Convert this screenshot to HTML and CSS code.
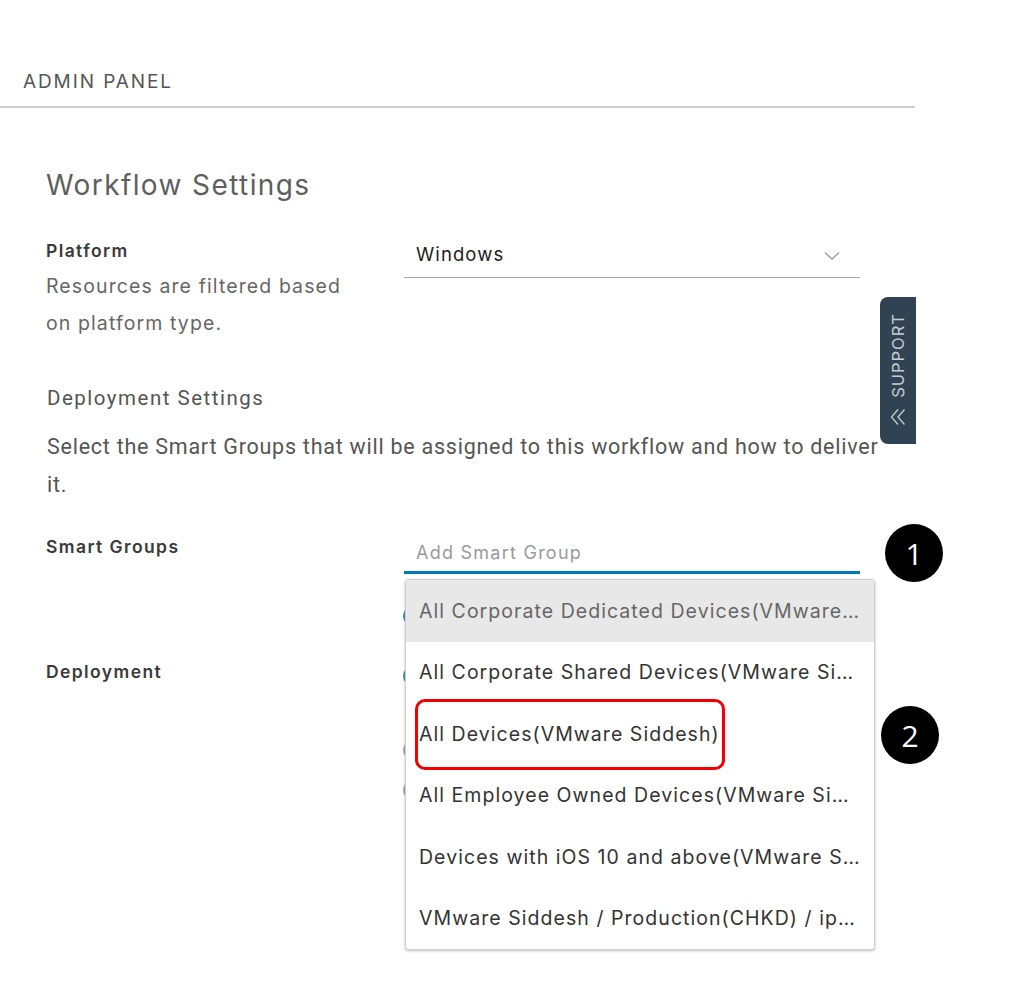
FILE: index.html
```html
<!DOCTYPE html>
<html>
<head>
<meta charset="utf-8">
<link rel="stylesheet" href="styles.css">
</head>
<body>
<div class="page">
  <div class="header">ADMIN PANEL</div>
  <div class="content">
    <h1 class="title">Workflow Settings</h1>
    <div class="row row-platform">
      <div class="label-col">
        <div class="label">Platform</div>
        <div class="help">Resources are filtered based on platform type.</div>
      </div>
      <div class="control-col">
        <div class="select">
          <span>Windows</span>
          <svg class="chev" width="16" height="10" viewBox="0 0 16 10"><path d="M1 1.5 L8 8 L15 1.5" fill="none" stroke="#9a9a9a" stroke-width="1.3"/></svg>
        </div>
      </div>
    </div>
    <div class="section">
      <div class="section-title">Deployment Settings</div>
      <div class="section-desc">Select the Smart Groups that will be assigned to this workflow and how to deliver it.</div>
    </div>
    <div class="row row-groups">
      <div class="label-col"><div class="label">Smart Groups</div></div>
      <div class="control-col">
        <div class="input">Add Smart Group</div>
        <div class="radios">
          <span class="radio blue r1"></span>
          <span class="radio blue r2"></span>
          <span class="radio grey r3"></span>
          <span class="radio grey r4"></span>
        </div>
        <div class="menu">
          <div class="item active">All Corporate Dedicated Devices(VMware…</div>
          <div class="item">All Corporate Shared Devices(VMware Si…</div>
          <div class="item">All Devices(VMware Siddesh)<span class="hl"></span></div>
          <div class="item">All Employee Owned Devices(VMware Si…</div>
          <div class="item">Devices with iOS 10 and above(VMware S…</div>
          <div class="item">VMware Siddesh / Production(CHKD) / ip…</div>
        </div>
      </div>
      <div class="badge b1">1</div>
      <div class="badge b2">2</div>
    </div>
    <div class="row row-deploy">
      <div class="label-col"><div class="label">Deployment</div></div>
    </div>
  </div>
  <div class="support">
    <span class="support-text">SUPPORT</span>
    <svg class="support-chev" width="16" height="18" viewBox="0 0 16 18"><path d="M8 1.5 L1.5 9 L8 16.5 M14.5 1.5 L8 9 L14.5 16.5" fill="none" stroke="#c5ccd3" stroke-width="1.3"/></svg>
  </div>
</div>
</body>
</html>
```
FILE: styles.css
```css
* { box-sizing: border-box; }
html, body { margin: 0; padding: 0; background: #fff; }
body { font-family: Inter, "Open Sans", sans-serif; color: #565656; }
.page { position: relative; width: 1024px; height: 993px; overflow: hidden; }

.header {
  width: 915px;
  height: 108px;
  padding: 70px 0 0 23px;
  font-size: 19px;
  color: #565656;
  border-bottom: 2px solid #d2d2d2;
  letter-spacing: 1.9px;
}

.content { padding-left: 46px; width: 915px; }

.title {
  margin: 60px 0 0 0;
  font-size: 28px;
  font-weight: 400;
  color: #5e5e5e;
  line-height: 34px;
  letter-spacing: 1.4px;
}

.row { display: flex; position: relative; }
.label-col { width: 358px; }
.control-col { width: 456px; position: relative; }

.label { font-size: 17.5px; font-weight: 600; color: #3a3a3a; line-height: 22px; letter-spacing: 1.4px; }
.help { font-size: 19.5px; color: #666; line-height: 37px; width: 310px; margin-top: 6px; letter-spacing: 1.1px; }

.row-platform { margin-top: 38px; }
.select {
  height: 44px;
  border-bottom: 1.5px solid #a8a8a8;
  display: flex;
  align-items: center;
  justify-content: space-between;
  padding: 0 20px 4px 12px;
  font-size: 18.5px;
  letter-spacing: 1.1px;
  color: #222;
  margin-top: -6px;
}
.chev { margin-top: 4px; }

.section { margin-top: 44px; padding-left: 1px; }
.section-title { font-family: Roboto, sans-serif; font-size: 20.5px; letter-spacing: 1.5px; color: #555; line-height: 24px; }
.section-desc { font-family: Roboto, sans-serif; font-size: 21.5px; letter-spacing: 0.75px; color: #555; line-height: 38px; margin-top: 18px; width: 852px; }

.row-groups { margin-top: 32px; height: 125px; }
.input {
  height: 39px;
  border-bottom: 3px solid #0079b8;
  padding: 0 12px 2px;
  font-size: 18px;
  letter-spacing: 1.25px;
  color: #9a9a9a;
  display: flex;
  align-items: center;
  margin-top: -1px;
}
.radio { position: absolute; left: -1px; width: 20px; height: 20px; border-radius: 50%; border: 3px solid #3a8fc0; display: block; }
.radio.grey { border-color: #a8a8a8; }
.r1 { top: 70px; }
.r2 { top: 130px; }
.r3 { top: 204px; }
.r4 { top: 244px; }

.menu {
  position: absolute;
  left: 1px;
  top: 43px;
  width: 470px;
  background: #fff;
  border: 1px solid #cfcfcf;
  border-radius: 3px;
  box-shadow: 0 1px 3px rgba(0,0,0,0.25);
  z-index: 2;
}
.item {
  position: relative;
  height: 61.5px;
  padding: 0 13px;
  display: flex;
  align-items: center;
  font-size: 19.5px;
  letter-spacing: 1.05px;
  color: #333;
  white-space: nowrap;
}
.item.active { background: #e8e8e8; color: #666; }
.hl {
  position: absolute;
  left: 9px;
  top: -4px;
  width: 310px;
  height: 71px;
  border: 3px solid #f40000;
  border-radius: 10px;
}

.badge {
  position: absolute;
  width: 58px;
  height: 58px;
  border-radius: 50%;
  background: #000;
  color: #fff;
  font-family: "Open Sans", sans-serif;
  font-size: 30px;
  display: flex;
  align-items: center;
  justify-content: center;
  z-index: 3;
}
.b1 { left: 839px; top: -12px; }
.b2 { left: 835px; top: 170px; }

.row-deploy { margin-top: 0; }

.support {
  position: absolute;
  left: 880px;
  top: 297px;
  width: 36px;
  height: 147px;
  background: #314352;
  border-radius: 8px 0 0 8px;
  display: flex;
  flex-direction: column;
  align-items: center;
  padding-top: 16px;
}
.support-text {
  writing-mode: vertical-rl;
  transform: rotate(180deg);
  font-size: 16.5px;
  color: #c5ccd3;
  letter-spacing: 1px;
}
.support-chev { margin-top: 10px; }
```
